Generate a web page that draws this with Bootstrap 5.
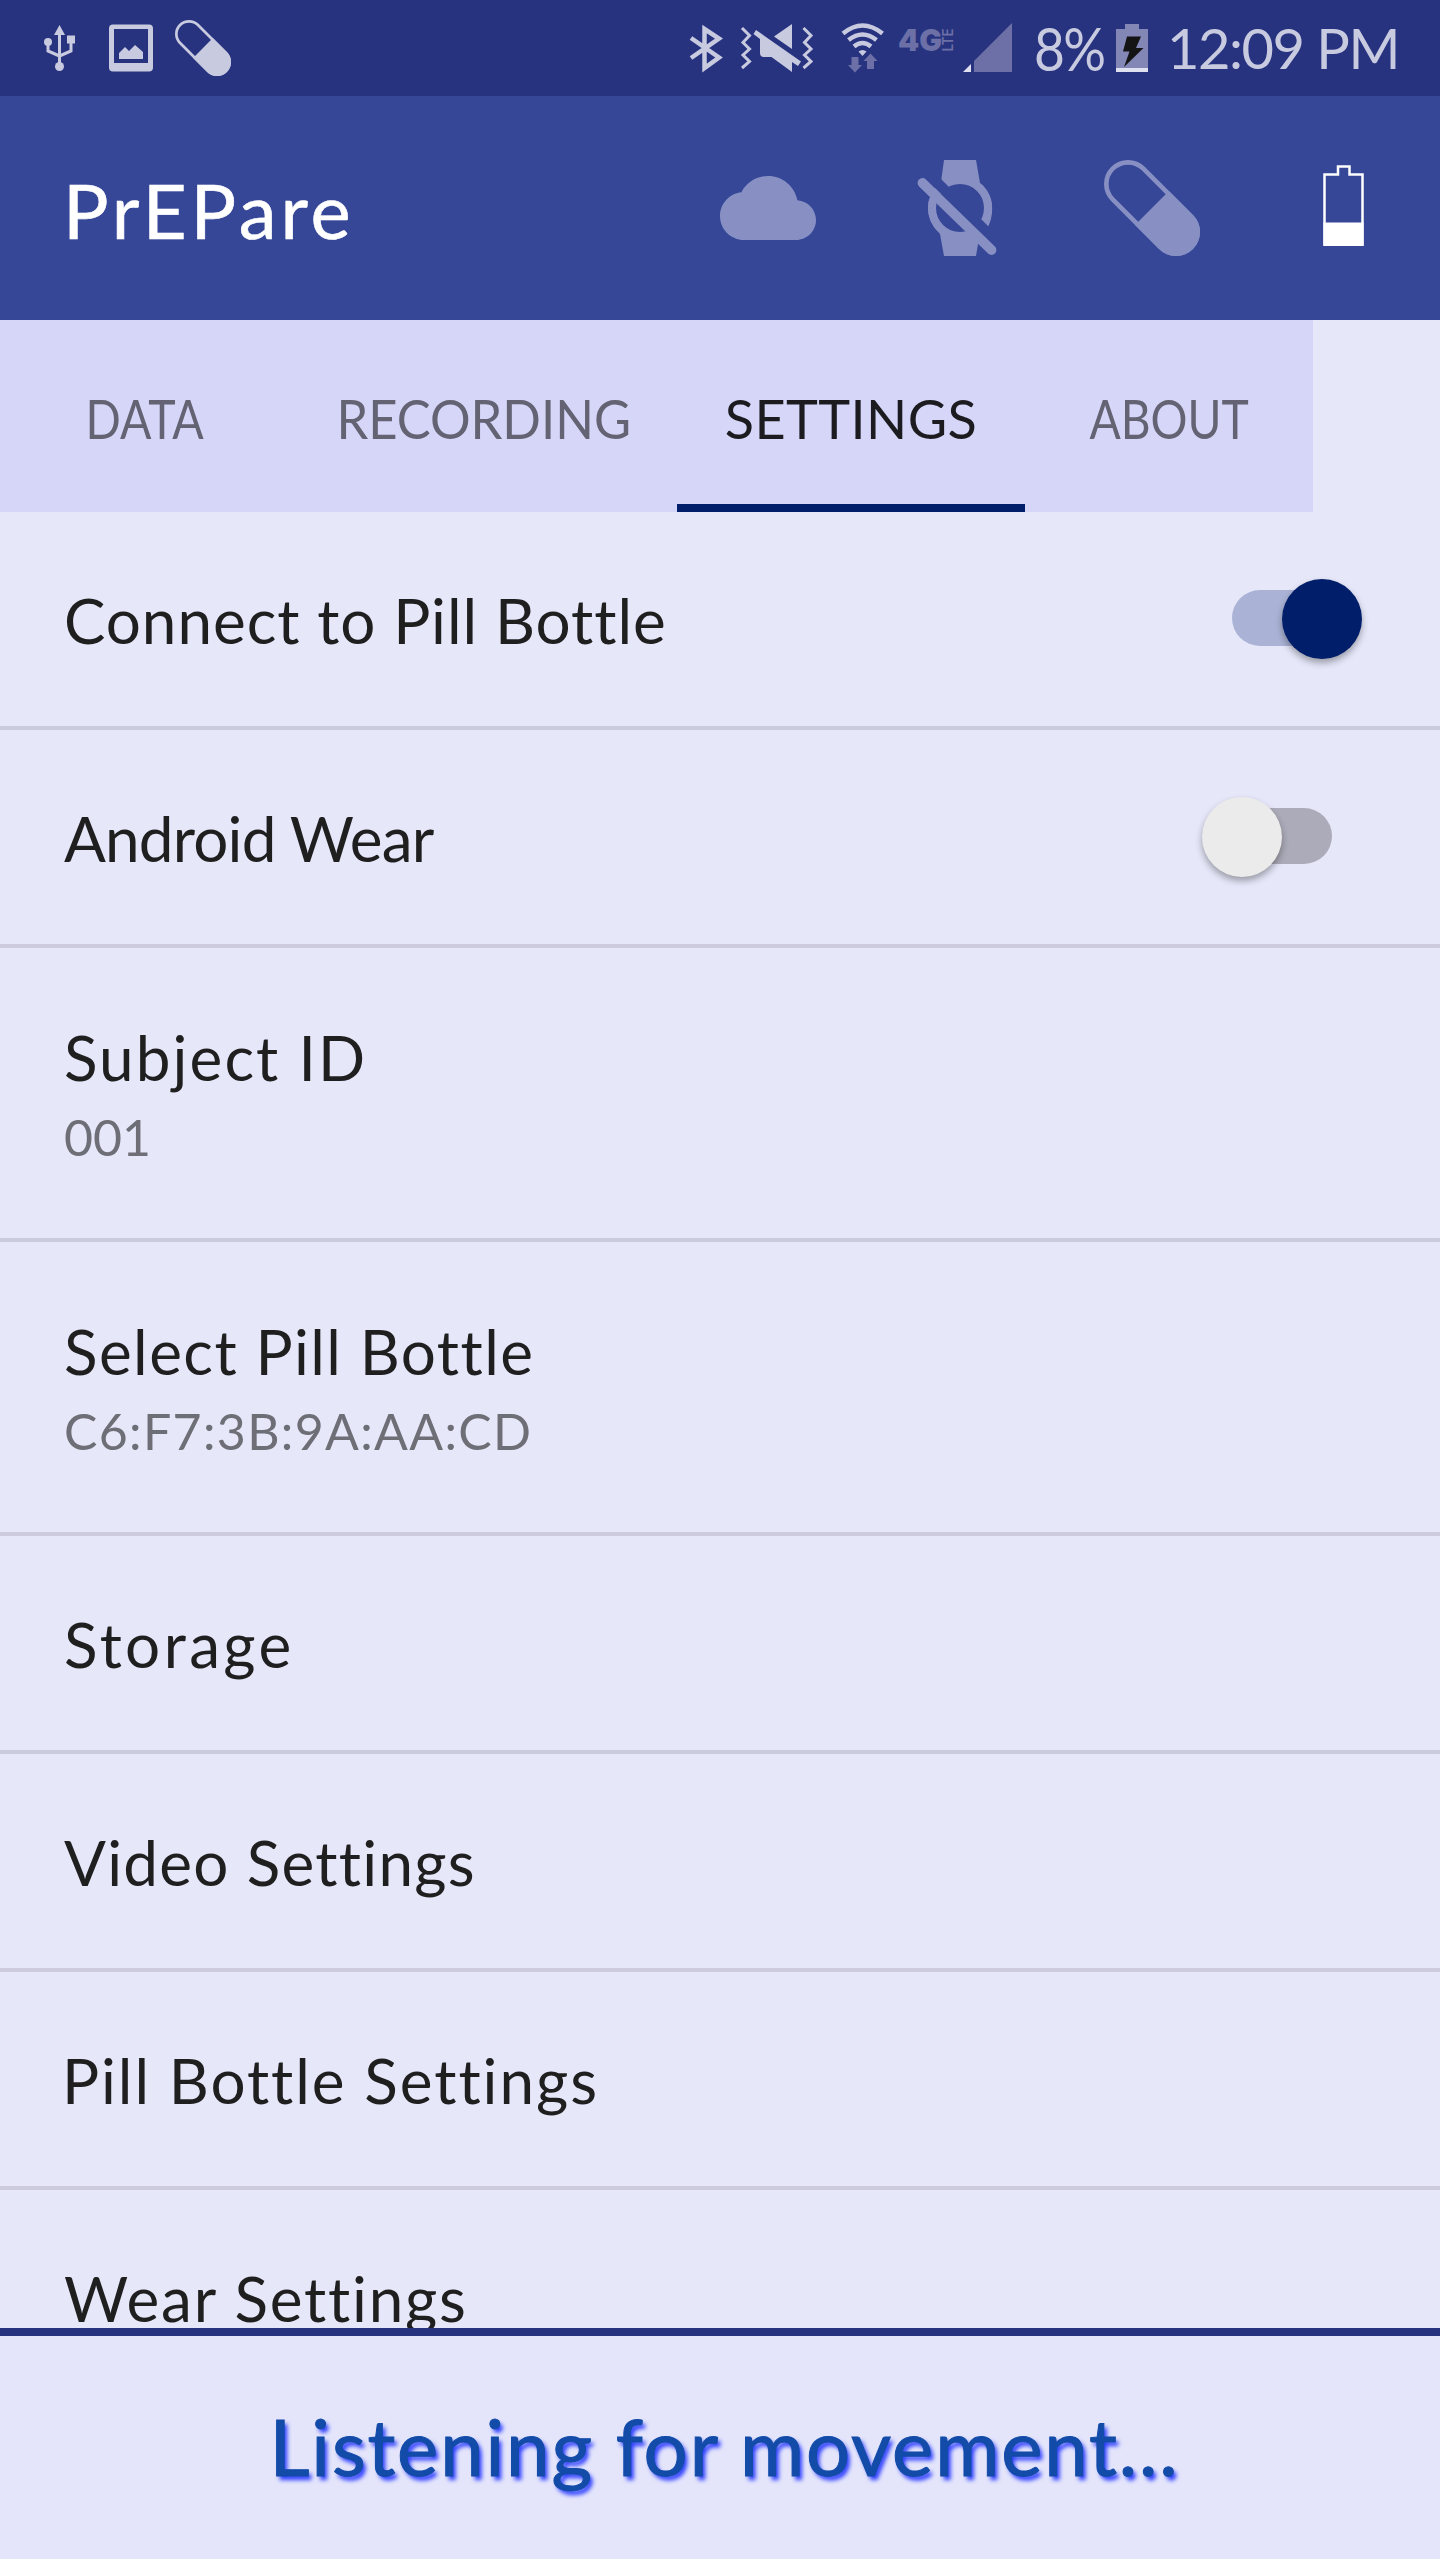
<!DOCTYPE html>
<html lang="en">
<head>
<meta charset="utf-8">
<meta name="viewport" content="width=device-width, initial-scale=1">
<title>PrEPare</title>
<link href="https://cdn.jsdelivr.net/npm/bootstrap@5.3.0/dist/css/bootstrap.min.css" rel="stylesheet">
<style>
  body { font-family: Lato, "Open Sans", sans-serif; background: #e6e7f9; color: #1f1f20; }
  svg { display: block; flex: none; }
  .phone { width: 1440px; height: 2560px; background: #e6e7f9; border-bottom: 1px solid #fff; }
  .status-bar { height: 96px; background: #283380; color: #c8cae0; padding-left: 40px; padding-right: 41px; }
  .notice-pill { margin-left: 19px; color: #c8cae0; }
  .status-icons { gap: 8px; }
  .clock { font-size: 56px; line-height: 94px; letter-spacing: -1.5px; margin-left: 15px; white-space: nowrap; }
  .charge { width: 78px; margin-left: 19px; font-size: 60px; line-height: 96px; letter-spacing: -2px; white-space: nowrap; }
  .charge span, .tab-link span { display: inline-block; }
  .charge span { transform: scaleX(.89); transform-origin: left; }
  .app-bar { height: 224px; background: #364798; padding: 0 48px 0 63px; }
  .app-title { font-size: 76px; font-weight: 400; line-height: 90px; letter-spacing: 3.9px; color: #fff; margin: 3px auto 0 0; -webkit-text-stroke: .6px #fff; }
  .app-icons { gap: 96px; }
  .tab-strip { width: 1313px; height: 192px; background: #d6d6f9; flex-wrap: nowrap; }
  .tab-link { height: 192px; padding: 13px 0 0; font-size: 54px; line-height: 70px; color: #636373; border-bottom: 8px solid transparent; display: flex; align-items: center; justify-content: center; text-decoration: none; white-space: nowrap; }
  .tab-link.active { color: #1c1c20; border-color: #001e69; }
  .w-data { width: 290px; } .w-data span { transform: scaleX(.86); }
  .w-rec { width: 387px; } .w-rec span { transform: scaleX(.94); }
  .w-set { width: 348px; } .w-set span { letter-spacing: .4px; }
  .w-about { width: 288px; } .w-about span { transform: scaleX(.855); }
  .prefs { height: 1816px; overflow: hidden; }
  .pref { height: 218px; flex: none; border-bottom: 4px solid #cccbdd; padding: 71px 78px 0 64px; }
  .pref.tall { height: 294px; padding-top: 72px; }
  .pref-title { font-size: 62px; line-height: 74px; white-space: nowrap; }
  .pref-note { font-size: 50px; line-height: 60px; margin-top: 13px; color: #6e6e77; }
  .toggle { width: 160px; height: 80px; margin-top: -4px; position: relative; padding: 11px 30px 13px; }
  .toggle-track { height: 56px; border-radius: 28px; background: #acabb9; }
  .toggle-thumb { position: absolute; top: 0; left: 0; width: 80px; height: 80px; border-radius: 50%; background: #ebebeb; box-shadow: 0 4px 7px rgba(0,0,0,.33); }
  .toggle.on .toggle-track { background: #aab3d6; }
  .toggle.on .toggle-thumb { left: 80px; background: #001e69; }
  .message-bar { height: 231px; border-top: 8px solid #283380; background: #e4e5fb; padding: 0 0 4px 9px; }
  .message { font-size: 78px; line-height: 94px; letter-spacing: 1.85px; color: #124ba8; text-shadow: 3px 4px 4px #2b3cff; -webkit-text-stroke: 1px #124ba8; white-space: nowrap; }
  .ls-1 { letter-spacing: .95px; } .ls-2 { letter-spacing: -.8px; } .ls-3 { letter-spacing: 2.1px; }
  .ls-4 { letter-spacing: 1.45px; } .ls-5 { letter-spacing: 3.4px; } .ls-6 { letter-spacing: 1.25px; }
  .ls-7 { letter-spacing: 1.95px; margin-left: -2px; } .ls-8 { letter-spacing: 1.8px; } .ls-9 { letter-spacing: 1.35px; }
</style>
<script src="https://cdn.jsdelivr.net/npm/bootstrap@5.3.0/dist/js/bootstrap.bundle.min.js"></script>
</head>
<body>
<svg width="0" height="0" class="position-absolute" aria-hidden="true">
  <symbol id="pill" viewBox="0 0 96 96">
    <g transform="rotate(45 48 48)">
      <rect x="-7.6" y="26.3" width="111.2" height="43.4" rx="21.7" fill="none" stroke="currentColor" stroke-width="4.6"/>
      <path d="M48 24H82A24 24 0 0 1 82 72H48Z" fill="currentColor"/>
    </g>
  </symbol>
</svg>
<div class="phone d-flex flex-column overflow-hidden">
  <header class="status-bar d-flex align-items-center flex-shrink-0">
    <!-- USB -->
    <svg width="40" height="96" viewBox="40 0 40 96" fill="#c8cae0" stroke="#c8cae0"><path stroke="none" d="M59.5 25l5.500 10H54z"/><circle cx="48" cy="42" r="4" stroke="none"/><path stroke="none" d="M67 35.500h8v8h-8z"/><circle cx="59.500" cy="66.500" r="4.500" stroke="none"/><path fill="none" stroke-width="3" d="M59.500 33V65M48 43v8l11.500 5M71 43v8L59.500 56"/></svg>
    <!-- Screenshot -->
    <svg class="ms-4" width="52" height="96" viewBox="104 0 52 96" fill="#c8cae0"><path fill-rule="evenodd" d="M113 24.500h36q4 0 4 4v39q0 4-4 4h-36q-4 0-4-4v-39q0-4 4-4zm1 4.500v34h34V29z"/><path d="M119 59v-6l6-6 4 4 6-6 8 7v7z"/></svg>
    <svg class="notice-pill" width="56" height="56"><use href="#pill"/></svg>
    <div class="d-flex align-items-center ms-auto">
      <div class="status-icons d-flex">
        <!-- Bluetooth and vibrate -->
        <svg width="42" height="96" viewBox="688 0 42 96" fill="none" stroke="#c8cae0" stroke-width="4.500"><path d="M692 38l28 19.500-14.500 10.500V29L720 38.500 692 58"/></svg>
        <svg width="84" height="96" viewBox="738 0 84 96" fill="#c8cae0"><path fill="none" stroke="#c8cae0" stroke-width="3" d="M743 28l7.500 7.500-6.500 7 6.500 6.500-6.500 6 6.500 6.500-7.500 6.500M804.500 28l7.500 7.500-6.500 7 6.500 6.500-6.500 6 6.500 6.500-7.500 6.500"/><path d="M793 24v25l-18-12.500zM757 30l45 31.500-3 4.500-6-4v10l-20.500-15H765q-4 0-4-4V39l-6.500-5z"/></svg>
        <!-- Wi-Fi with traffic arrows -->
        <svg width="64" height="96" viewBox="830 0 64 96" fill="none" stroke="#c8cae0" stroke-width="4.500"><path d="M844 33.500Q863.500 17.500 883.500 33.500M849.500 40Q863.500 29 877.500 40M855 46.500Q863.500 39.500 872 46.500"/><path fill="#c8cae0" stroke="none" d="M859.500 51.500q4-3 8 0l-4 4.500z"/><path fill="#6c70a6" stroke="none" d="M852.500 57h7v8h3.500l-7 7.500-7-7.500h3.500zM868 69v-8h-3.500l7-7.500 7 7.500H875v8z"/></svg>
      </div>
      <svg width="66" height="96" viewBox="894 0 66 96" fill="#6c70a6" font-family="Inter, sans-serif" font-weight="900"><text x="899" y="50.500" font-size="30" textLength="44" lengthAdjust="spacingAndGlyphs">4G</text><text transform="translate(953.500 51.500) rotate(-90)" font-size="14" font-weight="600" textLength="23" lengthAdjust="spacingAndGlyphs">LTE</text></svg>
      <svg width="56" height="96" viewBox="960 0 56 96"><path fill="#6c70a6" d="M975 61l38-38v49h-38z"/><path fill="#e0e1f0" d="M964 72l8-8v8z"/></svg>
      <div class="charge"><span>8%</span></div>
      <svg width="40" height="96" viewBox="1113 0 40 96"><path fill="#8387b6" d="M1126 24h14v5h9v43h-32V29h9z"/><path fill="#e0e1f0" d="M1117 68h32v4h-32z"/><path fill="#141414" d="M1128 36.500h14l-5 11.500h7.500L1125 67l5.500-15.500H1124z"/></svg>
      <div class="clock">12:09 PM</div>
    </div>
  </header>

  <nav class="app-bar navbar flex-nowrap flex-shrink-0">
    <h1 class="app-title">PrEPare</h1>
    <div class="app-icons d-flex align-items-center">
      <svg width="96" height="96" viewBox="0 0 24 24" fill="#8890c3"><path d="M19.350 10.040C18.670 6.590 15.640 4 12 4 9.110 4 6.600 5.640 5.350 8.040 2.340 8.360 0 10.910 0 14c0 3.310 2.690 6 6 6h13c2.760 0 5-2.240 5-5 0-2.640-2.050-4.780-4.650-4.960z"/></svg>
      <svg width="96" height="96" viewBox="912 160 96 96" fill="#8890c3"><path d="M944 160h32l4 23q16 13 11 36-4 14-12 19l-3 18h-32l-4-22q-12-11-12-26t13-26z"/><circle cx="960" cy="208" r="32"/><circle cx="960" cy="208" r="24" fill="#364798"/><path d="M929.500 175l67 67" stroke="#364798" stroke-width="10.600"/><path d="M922.500 183l69 67" stroke="#8890c3" stroke-width="9.800" stroke-linecap="round"/></svg>
      <svg width="96" height="96" color="#8890c3"><use href="#pill"/></svg>
      <svg width="96" height="96" viewBox="1296 160 96 96"><path fill="none" stroke="#fff" stroke-width="2.500" d="M1324.500 174.500h13.500v-8h11.500v8h13v70h-38z"/><path fill="#fff" d="M1323.500 222.500h40V246h-40z"/></svg>
    </div>
  </nav>

  <div class="tab-strip nav flex-shrink-0">
    <a class="tab-link w-data" href="#"><span>DATA</span></a>
    <a class="tab-link w-rec" href="#"><span>RECORDING</span></a>
    <a class="tab-link w-set active" href="#"><span>SETTINGS</span></a>
    <a class="tab-link w-about" href="#"><span>ABOUT</span></a>
  </div>

  <main class="prefs d-flex flex-column flex-shrink-0">
    <div class="pref d-flex justify-content-between"><div class="pref-title ls-1">Connect to Pill Bottle</div><div class="toggle on" role="switch" aria-checked="true"><div class="toggle-track"></div><div class="toggle-thumb"></div></div></div>
    <div class="pref d-flex justify-content-between"><div class="pref-title ls-2">Android Wear</div><div class="toggle" role="switch" aria-checked="false"><div class="toggle-track"></div><div class="toggle-thumb"></div></div></div>
    <div class="pref tall"><div class="pref-title ls-3">Subject ID</div><div class="pref-note">001</div></div>
    <div class="pref tall"><div class="pref-title ls-4">Select Pill Bottle</div><div class="pref-note ls-9">C6:F7:3B:9A:AA:CD</div></div>
    <div class="pref"><div class="pref-title ls-5">Storage</div></div>
    <div class="pref"><div class="pref-title ls-6">Video Settings</div></div>
    <div class="pref"><div class="pref-title ls-7">Pill Bottle Settings</div></div>
    <div class="pref"><div class="pref-title ls-8">Wear Settings</div></div>
  </main>

  <footer class="message-bar d-flex align-items-center justify-content-center flex-shrink-0">
    <div class="message">Listening for movement...</div>
  </footer>
</div>
</body>
</html>
